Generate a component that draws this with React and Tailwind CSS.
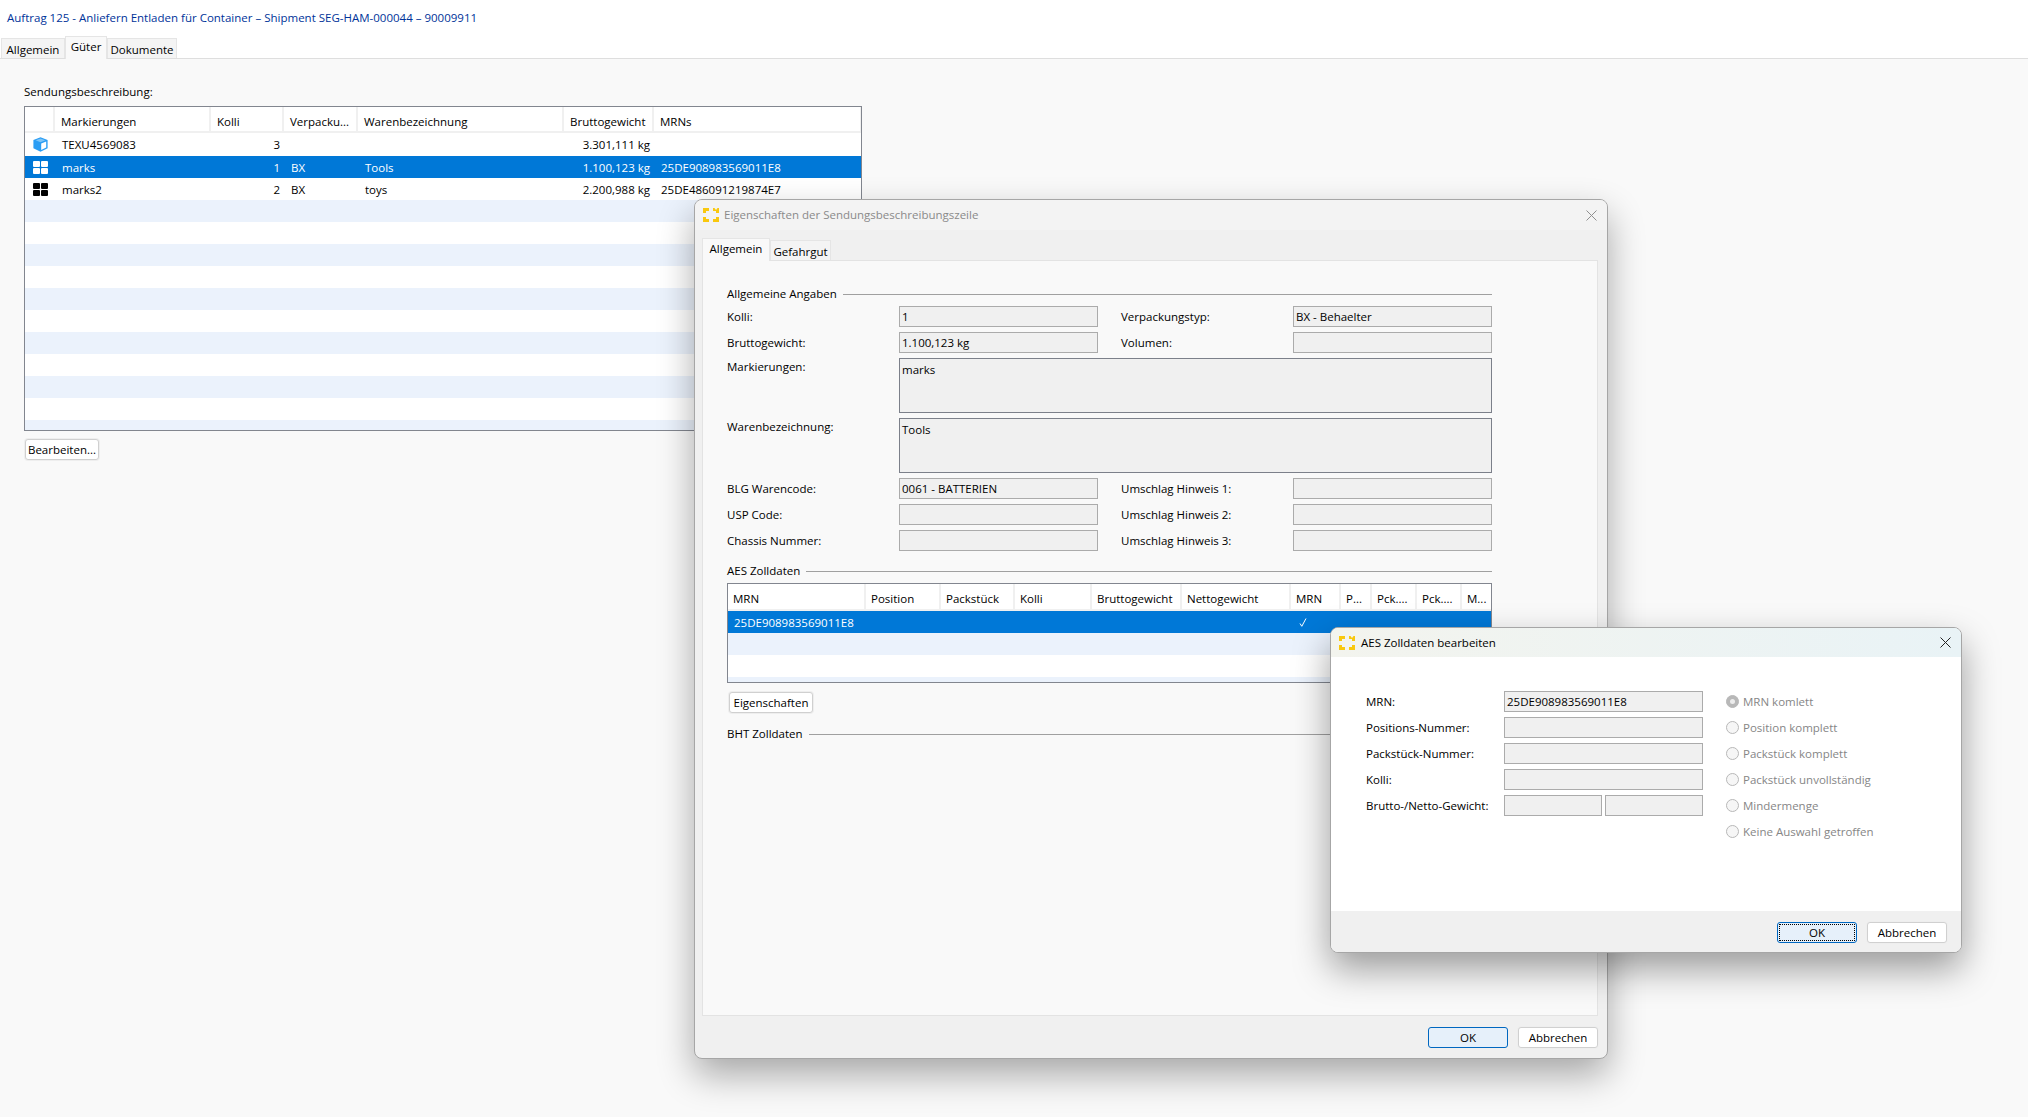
import React from 'react';

const mainCols = [
  { w: 30, label: '' },
  { w: 156, label: 'Markierungen' },
  { w: 73, label: 'Kolli', right: true },
  { w: 74, label: 'Verpacku...' },
  { w: 206, label: 'Warenbezeichnung' },
  { w: 90, label: 'Bruttogewicht', right: true },
  { w: 208, label: 'MRNs' },
];

const mainRows = [
  { icon: 'cube', cells: ['TEXU4569083', '3', '', '', '3.301,111 kg', ''] },
  { icon: 'grid', selected: true, cells: ['marks', '1', 'BX', 'Tools', '1.100,123 kg', '25DE908983569011E8'] },
  { icon: 'grid', cells: ['marks2', '2', 'BX', 'toys', '2.200,988 kg', '25DE486091219874E7'] },
];

const aesCols = [
  { w: 138, label: 'MRN' },
  { w: 75, label: 'Position' },
  { w: 74, label: 'Packstück' },
  { w: 77, label: 'Kolli' },
  { w: 90, label: 'Bruttogewicht' },
  { w: 109, label: 'Nettogewicht' },
  { w: 50, label: 'MRN' },
  { w: 31, label: 'P...' },
  { w: 45, label: 'Pck....' },
  { w: 45, label: 'Pck....' },
  { w: 31, label: 'M...' },
];

function AppIcon() {
  return (
    <svg width="16" height="16" viewBox="0 0 16 16" className="shrink-0">
      <path d="M0 1h6v3H3v2H0zM0 10h3v2h3v3H0zM16 10v5h-6v-3h3v-2z" fill="#f9c80e" />
      <path d="M10 1h1.5l1.5 2 1.5-2H16v5h-3V4h-3z" fill="#f9c80e" />
    </svg>
  );
}

function CubeIcon() {
  return (
    <svg width="15" height="15" viewBox="0 0 15 15">
      <path d="M7.5 0.3 14.6 3v8.2l-7.1 3.6-7.1-3.6V3z" fill="#2a9df4" />
      <path d="M2.6 3.3 7.5 1.6l4.9 1.7-4.9 1.9z" fill="#7cc4f8" />
      <path d="M8.2 6.4l5-1.9v6l-5 2.6z" fill="#ffffff" />
    </svg>
  );
}

function GridIcon({ color }) {
  return (
    <svg width="15" height="13" viewBox="0 0 15 13" fill={color}>
      <rect x="0" y="0" width="7" height="6" rx="1" />
      <rect x="8" y="0" width="7" height="6" rx="1" />
      <rect x="0" y="7" width="7" height="6" rx="1" />
      <rect x="8" y="7" width="7" height="6" rx="1" />
    </svg>
  );
}

function CloseIcon({ color }) {
  return (
    <svg width="11" height="11" viewBox="0 0 11 11" stroke={color} strokeWidth="1">
      <path d="M.5.5l10 10M10.5.5l-10 10" fill="none" />
    </svg>
  );
}

function HeaderRow({ cols, className = '', pad = 'pl-[5px]' }) {
  return (
    <div className={`flex shrink-0 border-b-2 border-[#f0f0f0] bg-white ${className}`}>
      {cols.map((col, idx) => (
        <div
          key={idx}
          style={{ width: col.w }}
          className={`flex shrink-0 items-center overflow-hidden whitespace-nowrap border-r-2 border-[#f0f0f0] pt-[5px] ${pad}`}
        >
          {col.label}
        </div>
      ))}
    </div>
  );
}

function MainTable() {
  const emptyRows = Array.from({ length: 11 });
  return (
    <div className="flex h-[325px] w-[838px] flex-col overflow-hidden border border-[#82868f] bg-white">
      <HeaderRow cols={mainCols} className="h-[26px]" pad="pl-[6px]" />
      {mainRows.map((row, idx) => (
        <div
          key={idx}
          className={`flex shrink-0 items-center ${row.selected ? 'bg-[#0078d7] text-white' : 'bg-white text-black'} ${idx === 0 ? 'h-[23px]' : 'h-[22px]'}`}
        >
          <div className="flex w-[30px] shrink-0 justify-center">
            {row.icon === 'cube' ? <CubeIcon /> : <GridIcon color={row.selected ? '#ffffff' : '#000000'} />}
          </div>
          {row.cells.map((cell, c) => {
            const col = mainCols[c + 1];
            return (
              <div
                key={c}
                style={{ width: col.w }}
                className={`shrink-0 overflow-hidden whitespace-nowrap pt-px ${col.right ? 'pr-[4px] text-right' : 'pl-[7px]'}`}
              >
                {cell}
              </div>
            );
          })}
        </div>
      ))}
      {emptyRows.map((_, idx) => (
        <div key={idx} className={`h-[22px] shrink-0 ${idx % 2 === 0 ? 'bg-[#ebf2fc]' : 'bg-white'}`} />
      ))}
    </div>
  );
}

function AesTable() {
  return (
    <div className="mt-[2px] flex h-[100px] w-[765px] flex-col overflow-hidden border border-[#82868f] bg-white">
      <HeaderRow cols={aesCols} className="h-[27px]" />
      <div className="relative flex h-[22px] shrink-0 items-center bg-[#0078d7] pl-[6px] pt-px text-white">
        25DE908983569011E8
        <svg width="8" height="9" viewBox="0 0 8 9" className="absolute left-[571px] top-[7px]">
          <path d="M1 5.5 2.8 8.3 7 .5" fill="none" stroke="#ffffff" strokeWidth="1" />
        </svg>
      </div>
      <div className="h-[22px] shrink-0 bg-[#ebf2fc]" />
      <div className="h-[22px] shrink-0 bg-white" />
      <div className="h-[22px] shrink-0 bg-[#ebf2fc]" />
    </div>
  );
}

function Field({ value, dark, className = '' }) {
  return (
    <div className={`overflow-hidden whitespace-nowrap border bg-[#f0f0f0] px-[2px] leading-[20px] text-black ${dark ? 'border-[#7c808a]' : 'h-[21px] border-[#ababab]'} ${className}`}>
      {value}
    </div>
  );
}

function Label({ children, className = '' }) {
  return <div className={`h-[21px] whitespace-nowrap ${className || 'leading-[22px]'}`}>{children}</div>;
}

function SectionHead({ title, className = '' }) {
  return (
    <div className={`flex h-5 items-center gap-[6px] ${className}`}>
      <span className="whitespace-nowrap">{title}</span>
      <div className="h-px flex-1 bg-[#a0a0a0]" />
    </div>
  );
}

function WinButton({ children, primary, focused, className = '' }) {
  if (primary) {
    return (
      <div className={`flex h-[21px] w-[80px] items-center justify-center rounded-[3px] border border-[#0067c0] bg-[#e6f0fa] ${className}`}>
        <div className={`flex h-[17px] w-[76px] items-center justify-center pt-px ${focused ? 'border border-dotted border-black' : ''}`}>
          {children}
        </div>
      </div>
    );
  }
  return (
    <div className={`flex h-[21px] items-center justify-center rounded-[3px] border border-[#d0d0d0] bg-white pt-px shadow-[0_0_0_1px_#eeeeee] ${className}`}>
      {children}
    </div>
  );
}

function TabButton({ children, active, className = '' }) {
  return (
    <div
      className={`flex items-center justify-center border border-b-0 border-[#e5e5e5] ${active ? 'z-10 -mb-px h-[23px] bg-[#f9f9f9] pb-[2px]' : 'h-5 bg-[#f4f4f4] pt-[2px]'} ${className}`}
    >
      {children}
    </div>
  );
}

function PropertiesDialog() {
  return (
    <div className="absolute left-[694px] top-[199px] flex h-[860px] w-[914px] flex-col overflow-hidden rounded-lg border border-[#a6a6a6] bg-[#f0f0f0] shadow-[0_16px_36px_rgba(0,0,0,0.33)]">
      <div className="flex h-[30px] shrink-0 items-center bg-[#f3f3f3] pl-[8px] pr-[10px] text-[#8a8a8a]">
        <AppIcon />
        <span className="ml-[5px] flex-1">Eigenschaften der Sendungsbeschreibungszeile</span>
        <CloseIcon color="#8f8f8f" />
      </div>
      <div className="flex h-[30px] shrink-0 items-end pl-[7px]">
        <TabButton active className="w-[68px]">Allgemein</TabButton>
        <TabButton className="w-[61px]">Gefahrgut</TabButton>
      </div>
      <div className="ml-[7px] mr-[9px] flex-1 border border-[#e3e3e3] bg-[#f9f9f9] pl-[24px] pt-[23px]">
        <SectionHead title="Allgemeine Angaben" className="w-[765px]" />
        <div className="mt-[2px] grid w-[765px] grid-cols-[172px_199px_23px_172px_199px] gap-y-[5px]">
          <Label>Kolli:</Label>
          <Field value="1" />
          <div />
          <Label>Verpackungstyp:</Label>
          <Field value="BX - Behaelter" />

          <Label>Bruttogewicht:</Label>
          <Field value="1.100,123 kg" />
          <div />
          <Label>Volumen:</Label>
          <Field value="" />

          <Label className="leading-[17px]">Markierungen:</Label>
          <Field dark value="marks" className="col-span-4 h-[55px] pt-[1px]" />

          <Label className="leading-[17px]">Warenbezeichnung:</Label>
          <Field dark value="Tools" className="col-span-4 h-[55px] pt-[1px]" />

          <Label>BLG Warencode:</Label>
          <Field value="0061 - BATTERIEN" />
          <div />
          <Label>Umschlag Hinweis 1:</Label>
          <Field value="" />

          <Label>USP Code:</Label>
          <Field value="" />
          <div />
          <Label>Umschlag Hinweis 2:</Label>
          <Field value="" />

          <Label>Chassis Nummer:</Label>
          <Field value="" />
          <div />
          <Label>Umschlag Hinweis 3:</Label>
          <Field value="" />
        </div>
        <SectionHead title="AES Zolldaten" className="mt-[10px] w-[765px]" />
        <AesTable />
        <WinButton className="ml-[2px] mt-[9px] w-[84px]">Eigenschaften</WinButton>
        <SectionHead title="BHT Zolldaten" className="mt-[11px] w-[765px]" />
      </div>
      <div className="flex h-[42px] shrink-0 items-start justify-end gap-[10px] pr-[9px] pt-[11px]">
        <WinButton primary>OK</WinButton>
        <WinButton className="w-[80px]">Abbrechen</WinButton>
      </div>
    </div>
  );
}

function Radio({ checked, label }) {
  return (
    <div className="flex h-[21px] items-center gap-[4px] whitespace-nowrap text-[#868686]">
      <div className={`flex size-[13px] items-center justify-center rounded-full border ${checked ? 'border-[#b8b8b8] bg-[#b8b8b8]' : 'border-[#b8b8b8] bg-[#f6f6f6]'}`}>
        {checked && <div className="size-[5px] rounded-full bg-[#ececec]" />}
      </div>
      <span className="pt-px">{label}</span>
    </div>
  );
}

function AesDialog() {
  return (
    <div className="absolute left-[1330px] top-[627px] flex h-[326px] w-[632px] flex-col overflow-hidden rounded-lg border border-[#a6a6a6] bg-white shadow-[0_16px_36px_rgba(0,0,0,0.38)]">
      <div className="flex h-[29px] shrink-0 items-center bg-gradient-to-r from-[#f3f4ee] to-[#e9f3f6] pl-[8px] pr-[10px]">
        <AppIcon />
        <span className="ml-[6px] flex-1">AES Zolldaten bearbeiten</span>
        <CloseIcon color="#222222" />
      </div>
      <div className="flex flex-1 pl-[35px] pt-[34px]">
        <div className="grid grid-cols-[138px_199px] content-start gap-y-[5px]">
          <Label>MRN:</Label>
          <Field value="25DE908983569011E8" />
          <Label>Positions-Nummer:</Label>
          <Field value="" />
          <Label>Packstück-Nummer:</Label>
          <Field value="" />
          <Label>Kolli:</Label>
          <Field value="" />
          <Label>Brutto-/Netto-Gewicht:</Label>
          <div className="flex gap-[3px]">
            <Field value="" className="w-[98px]" />
            <Field value="" className="w-[98px]" />
          </div>
        </div>
        <div className="ml-[23px] flex flex-col gap-[5px]">
          <Radio checked label="MRN komlett" />
          <Radio label="Position komplett" />
          <Radio label="Packstück komplett" />
          <Radio label="Packstück unvollständig" />
          <Radio label="Mindermenge" />
          <Radio label="Keine Auswahl getroffen" />
        </div>
      </div>
      <div className="flex h-[41px] shrink-0 items-start justify-end gap-[10px] bg-[#f0f0f0] pr-[14px] pt-[11px]">
        <WinButton primary focused>OK</WinButton>
        <WinButton className="w-[80px]">Abbrechen</WinButton>
      </div>
    </div>
  );
}

export default function App() {
  return (
    <div className="relative flex h-[1117px] flex-col overflow-hidden bg-[#f9f9f9] font-['Open_Sans',sans-serif] text-[11.5px] text-black">
      <div className="bg-white">
        <div className="flex h-[36px] items-center pl-[7px] text-[#003399]">
          Auftrag 125 - Anliefern Entladen für Container – Shipment SEG-HAM-000044 – 90009911
        </div>
        <div className="flex h-[23px] items-end border-b border-[#dedede] pl-[1px]">
          <TabButton className="w-[64px]">Allgemein</TabButton>
          <TabButton active className="w-[42px]">Güter</TabButton>
          <TabButton className="w-[70px]">Dokumente</TabButton>
        </div>
      </div>

      <div className="pl-[24px] pt-[24px]">
        <div className="h-[18px] leading-[18px]">Sendungsbeschreibung:</div>
        <div className="mt-[5px]">
          <MainTable />
        </div>
        <WinButton className="ml-[1px] mt-[8px] w-[74px]">Bearbeiten...</WinButton>
      </div>

      <PropertiesDialog />
      <AesDialog />
    </div>
  );
}
